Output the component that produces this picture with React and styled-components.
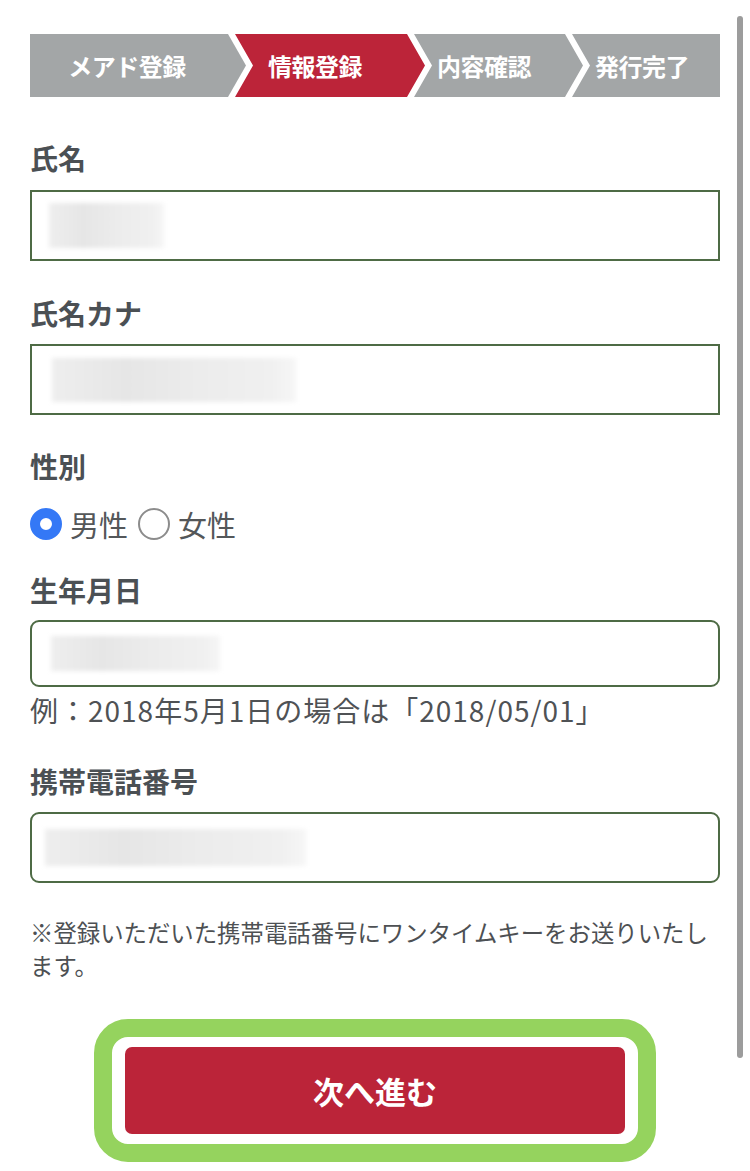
import React from "react";
import styled, { createGlobalStyle } from "styled-components";

const GlobalStyle = createGlobalStyle`
  html, body { margin: 0; padding: 0; background: #ffffff; }
  body { font-family: "Noto Sans CJK JP", "Noto Sans", sans-serif; }
  * { box-sizing: border-box; }
`;

const Page = styled.div`
  position: relative;
  width: 750px;
  min-height: 1171px;
  padding: 34px 30px 8px 30px;
  background: #ffffff;
  overflow: hidden;
`;

const ScrollThumb = styled.div`
  position: absolute;
  top: 16px;
  right: 7px;
  width: 6px;
  height: 1042px;
  border-radius: 3px;
  background: #9c9c9c;
`;

const StepBar = styled.ol`
  display: flex;
  margin: 0;
  padding: 0;
  list-style: none;
  height: 63px;
`;

const D = 18;

const Step = styled.li`
  flex: 0 0 ${(p) => p.$w}px;
  margin-left: ${(p) => (p.$first ? 0 : -11)}px;
  display: flex;
  align-items: center;
  justify-content: center;
  padding-left: ${(p) => p.$pl || 0}px;
  padding-right: ${(p) => p.$pr || 0}px;
  background: ${(p) => (p.$active ? "#bc2439" : "#a3a6a7")};
  color: #ffffff;
  font-weight: 700;
  font-size: 24px;
  letter-spacing: -0.5px;
  clip-path: ${(p) => {
    const notch = p.$first ? "" : `, ${D}px 50%`;
    if (p.$last) {
      return `polygon(0 0, 100% 0, 100% 100%, 0 100%${notch})`;
    }
    return `polygon(0 0, calc(100% - ${D}px) 0, 100% 50%, calc(100% - ${D}px) 100%, 0 100%${notch})`;
  }};
`;

const Form = styled.div`
  display: flex;
  flex-direction: column;
`;

const Label = styled.div`
  margin-top: ${(p) => p.$mt}px;
  height: 40px;
  line-height: 40px;
  font-size: 28px;
  font-weight: 700;
  color: #4b5054;
`;

const InputBox = styled.div`
  margin-top: ${(p) => p.$mt}px;
  height: ${(p) => p.$h}px;
  border: 2px solid #4e6b45;
  border-radius: ${(p) => (p.$rounded ? 9 : 0)}px;
  background: #ffffff;
  display: flex;
  align-items: center;
  padding-left: ${(p) => p.$pl}px;
`;

const Blurred = styled.span`
  display: block;
  width: ${(p) => p.$w}px;
  height: ${(p) => p.$h}px;
  background: linear-gradient(90deg, #eeeeee 0%, #e6e6e6 30%, #ececec 60%, #f0f0f0 90%, #f6f6f6 100%);
  filter: blur(2px);
`;

const RadioRow = styled.div`
  margin-top: 18px;
  height: 40px;
  display: flex;
  align-items: center;
`;

const RadioItem = styled.label`
  display: flex;
  align-items: center;
  gap: 8px;
  margin-right: 10px;
  font-size: 29px;
  color: #545759;
  line-height: 40px;
`;

const RadioDot = styled.span`
  display: inline-block;
  width: 32px;
  height: 32px;
  border-radius: 50%;
  ${(p) =>
    p.$checked
      ? `background: #ffffff; border: 10px solid #3478f6;`
      : `background: #ffffff; border: 2.5px solid #8c8c8c;`}
`;

const Hint = styled.div`
  margin-top: 5px;
  font-size: 28px;
  line-height: 36px;
  color: #4f5255;
  letter-spacing: 1px;
`;

const Note = styled.p`
  margin: 33px 0 0 0;
  font-size: 23.4px;
  line-height: 33px;
  color: #4d5053;
`;

const ButtonArea = styled.div`
  margin-top: 37px;
  display: flex;
  justify-content: center;
`;

const FocusRing = styled.div`
  border: 18px solid #95d35e;
  border-radius: 34px;
  padding: 10px 13px;
  background: #ffffff;
`;

const NextButton = styled.button`
  display: flex;
  align-items: center;
  justify-content: center;
  width: 500px;
  height: 87px;
  border: none;
  border-radius: 7px;
  background: #bb2439;
  color: #ffffff;
  font-family: "Noto Sans CJK JP", sans-serif;
  font-size: 31px;
  font-weight: 700;
  cursor: pointer;
`;

const steps = [
  { label: "メアド登録", w: 216, pr: 22 },
  { label: "情報登録", w: 190, pr: 30, active: true },
  { label: "内容確認", w: 169, pr: 29 },
  { label: "発行完了", w: 148, pr: 8, last: true },
];

export default function App() {
  return (
    <>
      <GlobalStyle />
      <Page>
        <StepBar>
          {steps.map((s, i) => (
            <Step
              key={s.label}
              $w={s.w}
              $pr={s.pr}
              $first={i === 0}
              $last={s.last}
              $active={s.active}
            >
              {s.label}
            </Step>
          ))}
        </StepBar>

        <Form>
          <Label $mt={41}>氏名</Label>
          <InputBox $mt={12} $h={71} $pl={17}>
            <Blurred $w={115} $h={45} />
          </InputBox>

          <Label $mt={32}>氏名カナ</Label>
          <InputBox $mt={11} $h={71} $pl={20}>
            <Blurred $w={244} $h={44} />
          </InputBox>

          <Label $mt={31}>性別</Label>
          <RadioRow>
            <RadioItem>
              <RadioDot $checked />
              男性
            </RadioItem>
            <RadioItem>
              <RadioDot />
              女性
            </RadioItem>
          </RadioRow>

          <Label $mt={26}>生年月日</Label>
          <InputBox $mt={10} $h={67} $rounded $pl={19}>
            <Blurred $w={169} $h={35} />
          </InputBox>
          <Hint>例：2018年5月1日の場合は「2018/05/01」</Hint>

          <Label $mt={33}>携帯電話番号</Label>
          <InputBox $mt={11} $h={71} $rounded $pl={13}>
            <Blurred $w={261} $h={37} />
          </InputBox>

          <Note>※登録いただいた携帯電話番号にワンタイムキーをお送りいたします。</Note>

          <ButtonArea>
            <FocusRing>
              <NextButton type="button">次へ進む</NextButton>
            </FocusRing>
          </ButtonArea>
        </Form>
        <ScrollThumb />
      </Page>
    </>
  );
}
